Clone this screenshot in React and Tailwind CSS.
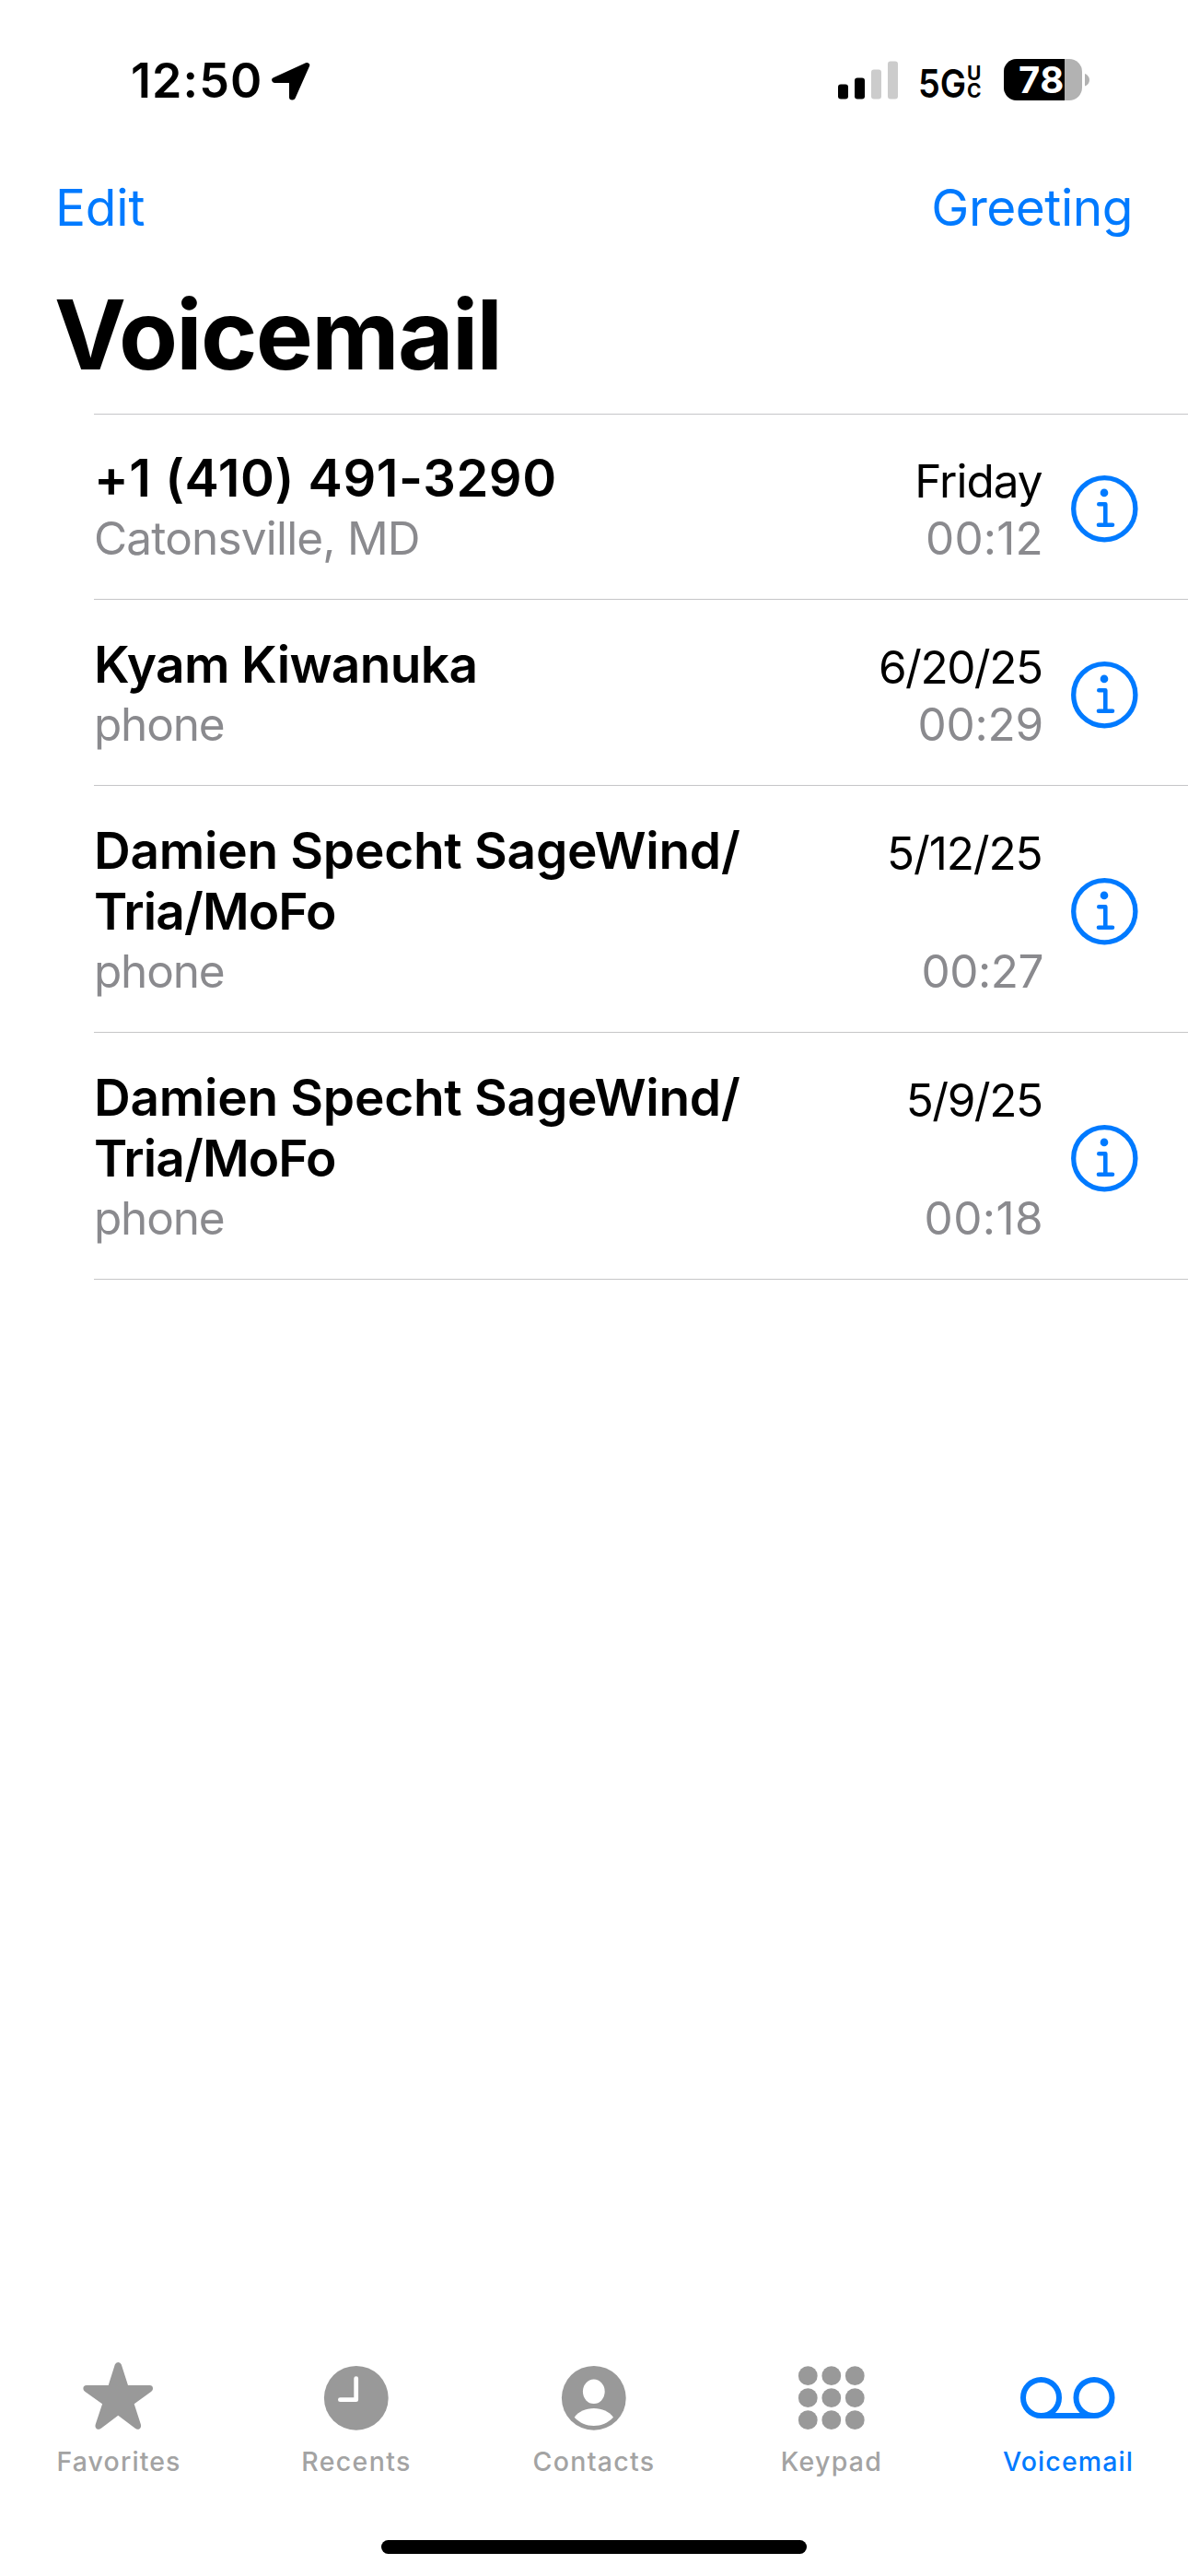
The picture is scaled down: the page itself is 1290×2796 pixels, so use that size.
import React from "react";

const VOICEMAILS = [
  {
    name: ["+1 (410) 491-3290"],
    nameClass: "text-[56px] tracking-[0.56px]",
    label: "Catonsville, MD",
    labelClass: "tracking-[-0.82px]",
    date: "Friday",
    dateClass: "tracking-[-1.03px]",
    length: "00:12",
    lengthClass: "tracking-[0.2px]",
    rowClass: "h-[201px] pt-[36px]",
  },
  {
    name: ["Kyam Kiwanuka"],
    nameClass: "text-[55px] tracking-[-0.65px]",
    label: "phone",
    labelClass: "tracking-[-1.2px]",
    date: "6/20/25",
    dateClass: "tracking-[-1.5px]",
    length: "00:29",
    lengthClass: "tracking-[-0.2px]",
    rowClass: "h-[202px] pt-[37px]",
  },
  {
    name: ["Damien Specht SageWind/", "Tria/MoFo"],
    nameClass: "text-[55px] tracking-[-0.27px] [&>span+span]:tracking-[-0.9px]",
    label: "phone",
    labelClass: "tracking-[-1.2px]",
    date: "5/12/25",
    dateClass: "tracking-[-1.13px]",
    length: "00:27",
    lengthClass: "tracking-[-0.5px]",
    rowClass: "h-[268px] pt-[37px]",
  },
  {
    name: ["Damien Specht SageWind/", "Tria/MoFo"],
    nameClass: "text-[55px] tracking-[-0.27px] [&>span+span]:tracking-[-0.9px]",
    label: "phone",
    labelClass: "tracking-[-1.2px]",
    date: "5/9/25",
    dateClass: "tracking-[-1.5px]",
    length: "00:18",
    lengthClass: "tracking-[0.4px]",
    rowClass: "h-[268px] pt-[37px]",
  },
];

function InfoIcon() {
  return (
    <svg width="74" height="74" viewBox="0 0 74 74" fill="none" stroke="#007aff" className="shrink-0">
      <circle cx="37.3" cy="37.2" r="33.6" strokeWidth="5.3" />
      <circle cx="37" cy="19.9" r="4.3" fill="#007aff" stroke="none" />
      <path d="M31.3 32.3H38.3V54.8M31 54.8H46" strokeWidth="4.6" strokeLinecap="round" strokeLinejoin="round" />
    </svg>
  );
}

function StatusBar() {
  return (
    <div className="flex h-[192px] items-start text-black">
      <span className="mt-[57px] ml-[142px] w-[152px] text-[52px] leading-[62px] font-semibold tracking-[1.08px]">12:50</span>
      <svg width="44" height="43" viewBox="0 0 44 43" className="mt-[67px]">
        <path d="M39.2 3.9L4.2 20H23V38.6H23.8Z" stroke="#000" strokeWidth="6" strokeLinejoin="round" />
      </svg>
      <svg width="66" height="42" viewBox="0 0 66 42" className="mt-[65.5px] ml-[572px]">
        <rect x="0" y="25.5" width="11" height="16" rx="3" />
        <rect x="18" y="18.5" width="11" height="23" rx="3" />
        <rect x="36" y="9.5" width="11" height="32" rx="3" fill="#ccc" />
        <rect x="54" y="0.5" width="11" height="41" rx="3" fill="#ccc" />
      </svg>
      <span className="mt-[63.5px] ml-[20.5px] w-[53.5px] origin-left scale-x-[0.88] text-[43px] leading-[52px] font-semibold">5G</span>
      <span className="mt-[70px] flex w-[40px] flex-col text-[21px] leading-[19px] font-bold">
        <span>U</span>
        <span>C</span>
      </span>
      <div className="mt-[64px] flex h-[45px] w-[85px] rounded-[14px] bg-[#b2b2b2]">
        <span className="w-[66px] rounded-l-[14px] bg-black pl-[16px] text-[40px] leading-[45px] font-bold tracking-[0.5px] text-white">78</span>
      </div>
      <svg width="6" height="14" viewBox="0 0 6 14" className="mt-[79.5px] ml-[3px]">
        <path d="M0 0C3 1 5 3.8 5 6.8S3 12.6 0 13.6Z" fill="#b2b2b2" />
      </svg>
    </div>
  );
}

function VoicemailRow({ item }) {
  return (
    <li className={`flex items-start border-b border-[#c6c6c8] ${item.rowClass}`}>
      <div className="flex w-full">
        <div className="flex flex-1 flex-col">
          <span className={`flex flex-col leading-[66px] font-semibold whitespace-nowrap text-black ${item.nameClass}`}>
            {item.name.map((line) => (
              <span key={line}>{line}</span>
            ))}
          </span>
          <span className={`text-[49.5px] leading-[64px] text-[#8a8a8e] ${item.labelClass}`}>{item.label}</span>
        </div>
        <div className="flex flex-col items-end justify-between text-[49.5px]">
          <span className={`-mb-[6px] pr-[1.5px] leading-[72px] text-black ${item.dateClass}`}>{item.date}</span>
          <span className={`leading-[64px] text-[#8a8a8e] ${item.lengthClass}`}>{item.length}</span>
        </div>
        <div className="mr-[54px] ml-[29px] flex items-center pt-[2px]">
          <InfoIcon />
        </div>
      </div>
    </li>
  );
}

function StarIcon() {
  return (
    <path
      fill="#999"
      d="M43.7 26L50.8 3.6Q51.8 1 54.3 1Q56.8 1 57.8 3.6L65 26H88.5C91 26 92 27.5 92 29.5C92 31 91.2 32 90 33L71.7 46.3L78.9 68.5C79.6 71 78.5 73.8 75.8 73.8C74.7 73.8 73.7 73.4 72.5 72.5L54.3 58.7L36.1 72.5C34.9 73.4 33.9 73.8 32.8 73.8C30.1 73.8 29 71 29.7 68.5L37.1 46.3L18.5 33C17.3 32 16.4 31 16.4 29.5C16.4 27.5 17.5 26 20.1 26Z"
    />
  );
}

function ClockIcon() {
  return (
    <>
      <circle cx="54.8" cy="39.8" r="34.9" fill="#999" />
      <path d="M54.7 18.6V41.7H37.4" fill="none" stroke="#fff" strokeWidth="4.8" strokeLinecap="round" strokeLinejoin="round" />
    </>
  );
}

function ContactIcon() {
  return (
    <>
      <circle cx="54.8" cy="39.8" r="34.9" fill="#999" />
      <ellipse cx="54.8" cy="32.8" rx="11.9" ry="13.2" fill="#fff" />
      <path d="M33.7 60.8C38 54.5 46 51 54.8 51S71.6 54.5 76 60.8C70 67 63 70 54.8 70S39.6 67 33.7 60.8Z" fill="#fff" />
    </>
  );
}

function KeypadIcon() {
  return [15.7, 39.7, 63.7].map((y) =>
    [29.3, 54.8, 80.3].map((x) => <circle key={`${x}-${y}`} cx={x} cy={y} r="10.4" fill="#999" />)
  );
}

function TapeIcon() {
  return (
    <g fill="none" stroke="#007aff" strokeWidth="6">
      <circle cx="24.5" cy="39.5" r="19.5" />
      <circle cx="82" cy="39.5" r="19.5" />
      <path d="M24.5 59H82" />
    </g>
  );
}

const TABS = [
  { label: "Favorites", Icon: StarIcon, className: "text-[#a3a3a3] tracking-[1.11px]" },
  { label: "Recents", Icon: ClockIcon, className: "text-[#a3a3a3] tracking-[1.33px]" },
  { label: "Contacts", Icon: ContactIcon, className: "text-[#a3a3a3] tracking-[1.3px]" },
  { label: "Keypad", Icon: KeypadIcon, className: "text-[#a3a3a3] tracking-[1.27px]" },
  { label: "Voicemail", Icon: TapeIcon, className: "pr-[2px] text-[#007aff] tracking-[1.12px]" },
];

export default function App() {
  return (
    <div className="flex h-[2796px] w-[1290px] flex-col overflow-hidden bg-white font-['Inter',sans-serif]">
      <StatusBar />
      <nav className="flex justify-between px-[60px] text-[55px] leading-[66px] text-[#007aff]">
        <span className="tracking-[-0.2px]">Edit</span>
        <span className="tracking-[-0.48px]">Greeting</span>
      </nav>
      <h1 className="mt-[42px] ml-[59px] text-[104.5px] leading-[126px] font-bold tracking-[-1.7px] text-black">Voicemail</h1>
      <ul className="mt-[23px] ml-[102px] border-t border-[#c6c6c8]">
        {VOICEMAILS.map((item) => (
          <VoicemailRow key={item.date} item={item} />
        ))}
      </ul>
      <footer className="mt-auto flex flex-col items-center">
        <div className="grid w-full grid-cols-5">
          {TABS.map(({ label, Icon, className }) => (
            <div key={label} className="flex flex-col items-center gap-[16px]">
              <svg width="110" height="76" viewBox="0 0 110 76">
                <Icon />
              </svg>
              <span className={`text-[28.5px] leading-[34px] font-medium ${className}`}>{label}</span>
            </div>
          ))}
        </div>
        <div className="mt-[68px] mb-[24px] h-[15px] w-[462px] rounded-full bg-black" />
      </footer>
    </div>
  );
}
